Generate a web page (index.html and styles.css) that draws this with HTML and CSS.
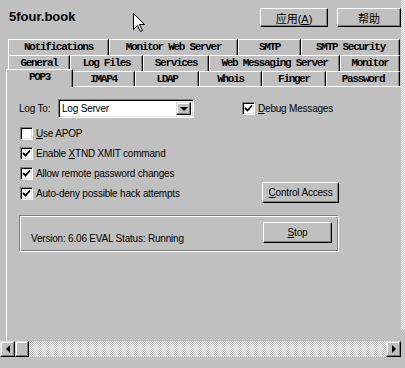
FILE: index.html
```html
<!DOCTYPE html>
<html lang="zh-CN">
<head>
    <meta charset="UTF-8">
    <title>5four.book</title>
    <link rel="stylesheet" href="styles.css">
</head>
<body>
    <div class="screen">
        <div class="main">
            <div class="titlebar">
                <div class="title">5four.book</div>
                <div class="actions">
                    <button class="btn btn-apply">应用(<u>A</u>)</button>
                    <button class="btn btn-help">帮助</button>
                </div>
            </div>

            <div class="tabs">
                <div class="tab-row row-1">
                    <div class="tab">Notifications</div>
                    <div class="tab">Monitor Web Server</div>
                    <div class="tab">SMTP</div>
                    <div class="tab">SMTP Security</div>
                </div>
                <div class="tab-row row-2">
                    <div class="tab">General</div>
                    <div class="tab">Log Files</div>
                    <div class="tab">Services</div>
                    <div class="tab">Web Messaging Server</div>
                    <div class="tab">Monitor</div>
                </div>
                <div class="tab-row row-3">
                    <div class="tab active">POP3</div>
                    <div class="tab">IMAP4</div>
                    <div class="tab">LDAP</div>
                    <div class="tab">Whois</div>
                    <div class="tab">Finger</div>
                    <div class="tab">Password</div>
                </div>
            </div>

            <div class="panel">
                <div class="panel-body">
                    <div class="logto">
                        <span class="logto-label">Log To:</span>
                        <div class="select">
                            <span class="select-value">Log Server</span>
                            <span class="select-btn"><i class="tri-down"></i></span>
                        </div>
                        <label class="check debug">
                            <span class="box on"><svg width="9" height="9" viewBox="0 0 9 9"><path d="M1 4 L3.5 6.5 L8 1.5" fill="none" stroke="#000" stroke-width="1.8"/></svg></span>
                            <span><u>D</u>ebug Messages</span>
                        </label>
                    </div>

                    <div class="checks">
                        <label class="check">
                            <span class="box"></span>
                            <span><u>U</u>se APOP</span>
                        </label>
                        <label class="check">
                            <span class="box on"><svg width="9" height="9" viewBox="0 0 9 9"><path d="M1 4 L3.5 6.5 L8 1.5" fill="none" stroke="#000" stroke-width="1.8"/></svg></span>
                            <span>Enable <u>X</u>TND XMIT command</span>
                        </label>
                        <label class="check">
                            <span class="box on"><svg width="9" height="9" viewBox="0 0 9 9"><path d="M1 4 L3.5 6.5 L8 1.5" fill="none" stroke="#000" stroke-width="1.8"/></svg></span>
                            <span>Allow remote <u>p</u>assword changes</span>
                        </label>
                        <div class="check-row">
                            <label class="check">
                                <span class="box on"><svg width="9" height="9" viewBox="0 0 9 9"><path d="M1 4 L3.5 6.5 L8 1.5" fill="none" stroke="#000" stroke-width="1.8"/></svg></span>
                                <span>Auto-deny possible hack attempts</span>
                            </label>
                            <button class="btn btn-access"><u>C</u>ontrol Access</button>
                        </div>
                    </div>

                    <div class="group">
                        <span class="status">Version: 6.06 EVAL Status: Running</span>
                        <button class="btn btn-stop"><u>S</u>top</button>
                    </div>
                </div>
            </div>

            <div class="hscroll">
                <div class="sb-btn"><i class="tri-left"></i></div>
                <div class="sb-thumb"></div>
                <div class="sb-track"></div>
                <div class="sb-btn"><i class="tri-right"></i></div>
            </div>
        </div>
        <div class="vscroll"></div>
    </div>

    <svg class="cursor" width="13" height="20" viewBox="0 0 13 20">
        <path d="M0.5 0.5 L0.5 16.5 L4.5 12.5 L7.5 18.5 L9.5 17.5 L6.5 11.5 L11.5 11.5 Z" fill="#fff" stroke="#000" stroke-width="1"/>
    </svg>
</body>
</html>
```

FILE: styles.css
```css
body {
    margin: 0;
    background: #c0c0c0;
    font-family: 'Liberation Sans', Arial, sans-serif;
    font-size: 10px;
    letter-spacing: -0.2px;
    color: #000;
    overflow: hidden;
}
.screen {
    display: grid;
    grid-template-columns: 401px 4px;
    width: 405px;
    height: 368px;
    position: relative;
}
.main {
    display: flex;
    flex-direction: column;
    height: 368px;
    overflow: hidden;
}
.titlebar {
    display: flex;
    align-items: flex-start;
    height: 39px;
    box-sizing: border-box;
    padding: 8px 0 0 9px;
}
.title {
    font-weight: bold;
    font-size: 13px;
    letter-spacing: 0;
    margin-top: 1px;
}
.actions {
    margin-left: auto;
    display: flex;
    gap: 9px;
}
.btn {
    background: #c0c0c0;
    border: 1px solid;
    border-color: #fff #000 #000 #fff;
    box-shadow: inset -1px -1px 0 #808080;
    font-family: 'Liberation Sans', Arial, sans-serif;
    font-size: 10px;
    letter-spacing: -0.2px;
    color: #000;
    padding: 0;
    height: 19px;
}
.btn-apply, .btn-help {
    font-family: 'Liberation Sans', 'Noto Sans CJK SC', sans-serif;
    font-size: 11px;
    letter-spacing: 0;
}
.btn-apply {
    width: 68px;
}
.btn-help {
    width: 64px;
}

/* tabs */
.tabs {
    padding-left: 8px;
}
.tab-row {
    display: grid;
    height: 16px;
}
.row-1 {
    grid-template-columns: 101px 129px 63px 99px;
}
.row-2 {
    grid-template-columns: 62px 73px 66px 131px 60px;
}
.row-3 {
    grid-template-columns: 64px 63px 64px 63px 64px 74px;
    height: 15px;
}
.tab {
    border-top: 1px solid #fff;
    border-left: 1px solid #fff;
    border-right: 1px solid #000;
    box-shadow: inset -1px 0 0 #808080;
    font-family: 'Liberation Mono', 'Courier New', monospace;
    font-size: 11px;
    font-weight: bold;
    letter-spacing: -1.3px;
    line-height: 14px;
    text-align: center;
    white-space: nowrap;
    overflow: hidden;
}
.tab.active {
    position: relative;
    z-index: 1;
    margin: -2px -1px -1px -2px;
    background: #c0c0c0;
    line-height: 15px;
}

/* panel */
.panel {
    flex: 1;
    margin-left: 6px;
    border-top: 1px solid #fff;
    border-left: 1px solid #fff;
    padding: 12px 0 0 12px;
}
.panel-body {
    width: 320px;
}
.logto {
    display: flex;
    align-items: center;
    height: 19px;
}
.logto-label {
    width: 39px;
}
.select {
    width: 136px;
    height: 19px;
    box-sizing: border-box;
    border: 1px solid;
    border-color: #808080 #fff #fff #808080;
    box-shadow: inset 1px 1px 0 #000, inset -1px -1px 0 #dfdfdf;
    background: #fff;
    display: flex;
    align-items: center;
    padding: 0 2px 0 3px;
}
.select-value {
    flex: 1;
}
.select-btn {
    width: 15px;
    height: 13px;
    box-sizing: border-box;
    background: #c0c0c0;
    border: 1px solid;
    border-color: #dfdfdf #000 #000 #dfdfdf;
    box-shadow: inset -1px -1px 0 #808080, inset 1px 1px 0 #fff;
    display: flex;
    align-items: center;
    justify-content: center;
}
.tri-down {
    width: 0;
    height: 0;
    border-left: 4px solid transparent;
    border-right: 4px solid transparent;
    border-top: 4px solid #000;
}
.check {
    display: flex;
    align-items: center;
    gap: 3px;
    height: 20px;
    padding-left: 1px;
}
.debug {
    margin-left: 48px;
    padding-left: 0;
}
.box {
    width: 13px;
    height: 13px;
    box-sizing: border-box;
    background: #fff;
    border: 1px solid;
    border-color: #808080 #fff #fff #808080;
    box-shadow: inset 1px 1px 0 #000, inset -1px -1px 0 #dfdfdf;
    display: flex;
    align-items: center;
    justify-content: center;
}
.checks {
    margin-top: 5px;
}
.check-row {
    display: flex;
    align-items: center;
    height: 20px;
}
.btn-access {
    margin-left: auto;
    width: 77px;
    height: 21px;
    margin-top: -2px;
}
.group {
    margin-top: 12px;
    height: 37px;
    box-sizing: border-box;
    border: 1px solid;
    border-color: #808080 #fff #fff #808080;
    box-shadow: inset 1px 1px 0 #fff, inset -1px -1px 0 #808080;
    display: flex;
    align-items: center;
    padding: 0 6px 0 11px;
}
.status {
    padding-top: 9px;
}
.btn-stop {
    margin-left: auto;
    width: 69px;
    height: 21px;
    margin-top: -2px;
}

/* scrollbars */
.hscroll {
    display: flex;
    height: 16px;
    margin-bottom: 11px;
}
.sb-btn, .sb-thumb {
    width: 15px;
    box-sizing: border-box;
    background: #c0c0c0;
    border: 1px solid;
    border-color: #dfdfdf #000 #000 #dfdfdf;
    box-shadow: inset -1px -1px 0 #808080, inset 1px 1px 0 #fff;
    display: flex;
    align-items: center;
    justify-content: center;
}
.sb-thumb {
    width: 14px;
}
.sb-track {
    flex: 1;
    background: repeating-conic-gradient(#fff 0 25%, #c0c0c0 0 50%) 0 0 / 2px 2px;
}
.tri-left, .tri-right {
    width: 0;
    height: 0;
    border-top: 4px solid transparent;
    border-bottom: 4px solid transparent;
}
.tri-left {
    border-right: 4px solid #000;
}
.tri-right {
    border-left: 4px solid #000;
}
.vscroll {
    height: 330px;
    background: repeating-conic-gradient(#fff 0 25%, #c0c0c0 0 50%) 0 0 / 2px 2px;
}
.cursor {
    position: absolute;
    left: 133px;
    top: 13px;
}
```
